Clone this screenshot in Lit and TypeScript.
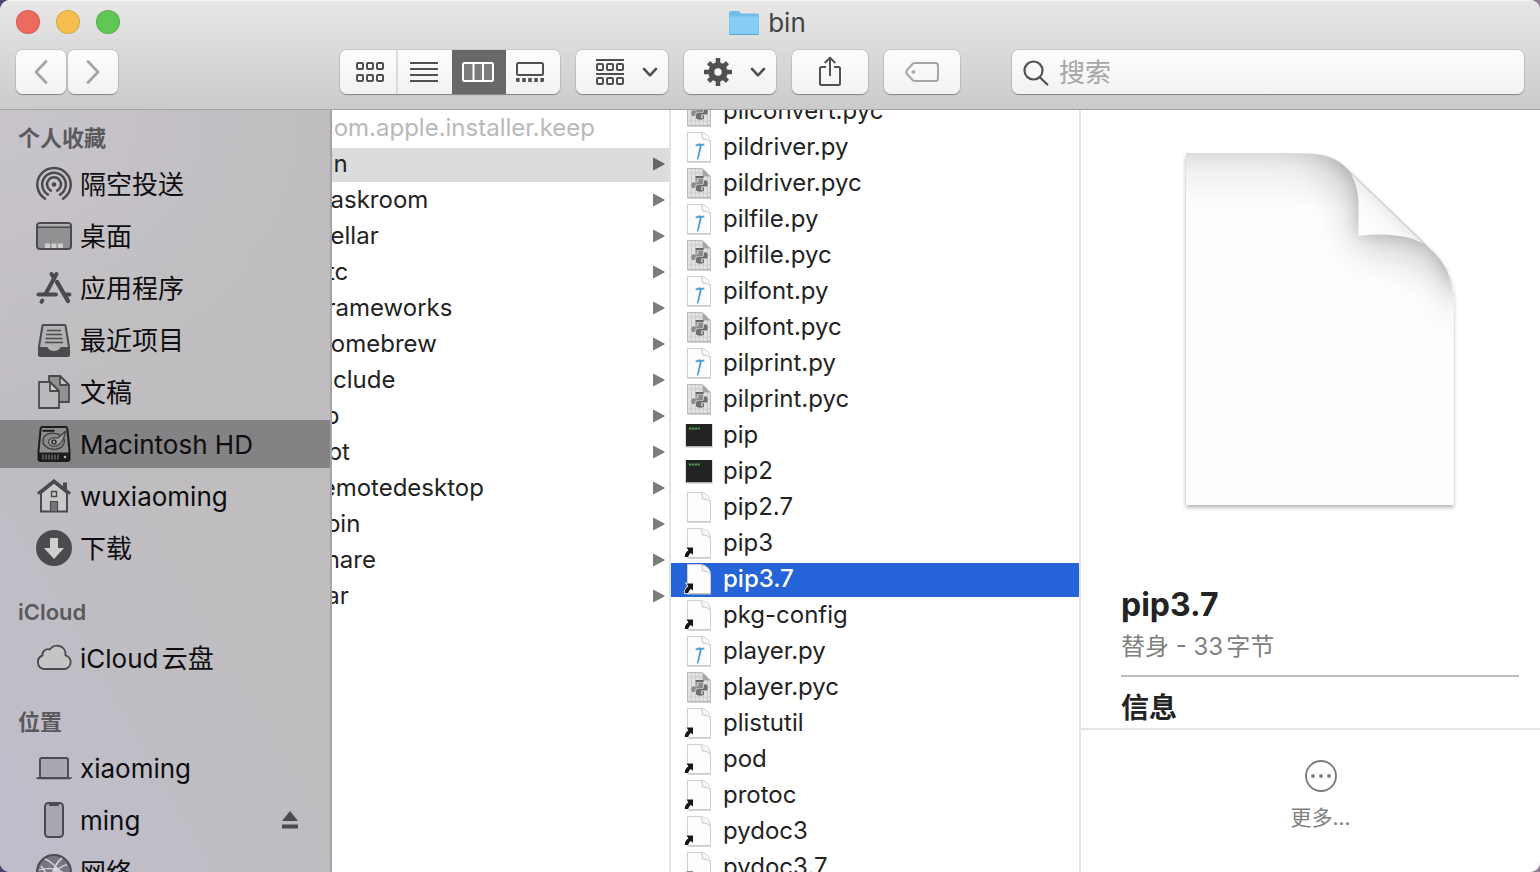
import { LitElement, html, css, svg } from "lit";
import { customElement, property, query } from "lit/decorators.js";
import { classMap } from "lit/directives/class-map.js";

type FileKind = "py" | "pyc" | "exec" | "doc" | "alias" | "folder";

interface Entry {
  name: string;
  kind: FileKind;
}

/* ---------- toolbar glyphs ---------- */

const backGlyph = html`<svg width="14" height="24" viewBox="0 0 14 24" fill="none" stroke="#a3a3a3" stroke-width="2.6" stroke-linecap="round" stroke-linejoin="round"><path d="M12 1.5 2 12l10 10.5" /></svg>`;
const forwardGlyph = html`<svg width="14" height="24" viewBox="0 0 14 24" fill="none" stroke="#a3a3a3" stroke-width="2.6" stroke-linecap="round" stroke-linejoin="round"><path d="M2 1.5 12 12 2 22.500" /></svg>`;
const gridGlyph = html`<svg width="28" height="20" viewBox="0 0 28 20" fill="none" stroke="#505050" stroke-width="2">
  <rect x="1" y="1" width="6" height="6" rx="1" /><rect x="11" y="1" width="6" height="6" rx="1" /><rect x="21" y="1" width="6" height="6" rx="1" />
  <rect x="1" y="13" width="6" height="6" rx="1" /><rect x="11" y="13" width="6" height="6" rx="1" /><rect x="21" y="13" width="6" height="6" rx="1" />
</svg>`;
const listGlyph = html`<svg width="28" height="20" viewBox="0 0 28 20" stroke="#505050" stroke-width="2"><path d="M0 1h28M0 7h28M0 13h28M0 19h28" /></svg>`;
const columnsGlyph = html`<svg width="32" height="20" viewBox="0 0 32 20" fill="#7c7c7c" stroke="#fff" stroke-width="2"><rect x="1" y="1" width="30" height="18" rx="1.500" /><path d="M11.500 1v18M21 1v18" /></svg>`;
const galleryGlyph = html`<svg width="28" height="20" viewBox="0 0 28 20">
  <rect x="1" y="1" width="26" height="12" rx="1.500" fill="none" stroke="#505050" stroke-width="2" />
  <path d="M0 16h3.600v4H1.500Q0 20 0 18.500zM6.200 16h3.500v4H6.200zM12.200 16h3.500v4h-3.500zM18.300 16h3.500v4h-3.500zM24.400 16H28v2.500q0 1.500-1.500 1.500h-2.100z" fill="#505050" />
</svg>`;
const groupGlyph = html`<svg width="28" height="26" viewBox="0 0 28 26" fill="none" stroke="#505050" stroke-width="2">
  <path d="M0 1h28M0 15h28" />
  <rect x="1" y="5" width="6" height="6" rx="1" /><rect x="11" y="5" width="6" height="6" rx="1" /><rect x="21" y="5" width="6" height="6" rx="1" />
  <rect x="1" y="19" width="6" height="6" rx="1" /><rect x="11" y="19" width="6" height="6" rx="1" /><rect x="21" y="19" width="6" height="6" rx="1" />
</svg>`;
const chevronGlyph = html`<svg width="16" height="10" viewBox="0 0 16 10" fill="none" stroke="#505050" stroke-width="2.600" stroke-linecap="round" stroke-linejoin="round"><path d="m2 1.900 6 6.400 6-6.400" /></svg>`;
const gearGlyph = html`<svg width="28" height="28" viewBox="0 0 28 28">
  <g fill="none" stroke="#505050" stroke-width="4.600"><path d="M14 0v8M14 20v8M0 14h8M20 14h8M4.600 4.600l5.200 5.200M18.200 18.200l5.200 5.200M23.400 4.600l-5.200 5.200M9.800 18.200l-5.200 5.200" /><circle cx="14" cy="14" r="6.700" stroke-width="6" /></g>
</svg>`;
const shareGlyph = html`<svg width="24" height="32" viewBox="0 0 24 32" fill="none" stroke="#505050" stroke-width="2" stroke-linejoin="round"><path d="M8 11H3.500Q2 11 2 12.500v15Q2 29 3.500 29h17q1.500 0 1.500-1.500v-15Q22 11 20.500 11H16M12 20V2M6.800 7 12 1.600 17.200 7" /></svg>`;
const tagGlyph = html`<svg width="34" height="20" viewBox="0 0 34 20" fill="none" stroke="#a6a6a6" stroke-width="2" stroke-linejoin="round"><path d="M10 1h20.500Q33 1 33 3.500v13q0 2.500-2.500 2.500H10q-1.500 0-2.500-1L2 12q-1.500-2 0-4l5.500-6q1-1 2.500-1z" /><circle cx="8.500" cy="10" r="1.400" fill="#a6a6a6" stroke-width="1" /></svg>`;
const searchGlyph = html`<svg width="26" height="26" viewBox="0 0 26 26" fill="none" stroke="#505050" stroke-width="2.200" stroke-linecap="round"><circle cx="10.500" cy="10.500" r="9" /><path d="m17 17.500 7.300 7" /></svg>`;
const folderGlyph = html`<svg width="32" height="28" viewBox="0 0 32 28">
  <path d="M1 4Q1 2 2.500 2h7.300q1 0 1.700.8L13 4.500h16.500Q31 4.500 31 6v18.500q0 1.500-1.500 1.500h-27Q1 26 1 24.500z" fill="#6fbde8" />
  <path d="M1.500 7.500h29v16.800q0 1-1 1h-27q-1 0-1-1z" fill="#86cdf5" />
  <path d="M1.500 25.500h29" stroke="#5aa6d2" stroke-width="1" />
</svg>`;

/* ---------- sidebar glyphs ---------- */

const airdropGlyph = html`<svg width="36" height="36" viewBox="0 0 36 36" fill="none" stroke="#4c4a4d" stroke-width="2.500" stroke-linecap="round">
  <path d="M9 32.700A16.700 16.700 0 1 1 27 32.700" /><path d="M12 28.600A11.800 11.800 0 1 1 24 28.600" /><path d="M14.800 24.600A7 7 0 1 1 21.200 24.600" />
  <circle cx="18" cy="18.500" r="2.300" fill="#4c4a4d" stroke="none" />
</svg>`;
const desktopGlyph = html`<svg width="36" height="36" viewBox="0 0 36 36">
  <rect x="1" y="5" width="34" height="26" rx="3" fill="#919093" stroke="#4c4a4d" stroke-width="2" />
  <path d="M2.500 6h31v2.500h-31z" fill="#b0aeb1" /><path d="M2 9.200h32" stroke="#4c4a4d" stroke-width="1.400" />
  <path d="M9 25.500h5V30H9zM15.500 25.500h5V30h-5zM22 25.500h5V30h-5z" fill="#d0ced1" />
</svg>`;
const appsGlyph = html`<svg width="36" height="36" viewBox="0 0 36 36" fill="none" stroke="#4c4a4d" stroke-linecap="round">
  <path d="M20.500 4 9.500 24" stroke-width="4" /><path d="M15.500 4 18 8" stroke-width="4" />
  <path d="M21 12 32 31" stroke-width="4.400" /><path d="M2.500 24.500H20M28.500 24.500h5" stroke-width="4" /><path d="M6.300 30.500 5.500 31.800" stroke-width="4" />
</svg>`;
const recentsGlyph = html`<svg width="36" height="36" viewBox="0 0 36 36">
  <path d="M6.500 3.500Q6.700 3 7.500 3h21q.8 0 1 .5L33 25v7.500q0 1.500-1.500 1.500h-27Q3 34 3 32.500V25z" fill="#b3b1b4" stroke="#4c4a4d" stroke-width="2" stroke-linejoin="round" />
  <path d="M3 25h7.500q1 0 1.500 1 1.500 3 6 3t6-3q.5-1 1.500-1H33v8.500H3z" fill="#4c4a4d" />
  <path d="M11 8.500h14M10 12.500h16M9.500 16.500h17M9 20.500h18" stroke="#4c4a4d" stroke-width="1.700" />
</svg>`;
const docsGlyph = html`<svg width="36" height="36" viewBox="0 0 36 36" stroke="#4c4a4d" stroke-width="1.800" stroke-linejoin="round">
  <path d="M13 2h11l9 9v17H13z" fill="#919093" /><path d="M24 2v9h9z" fill="#c2c0c3" />
  <path d="M3 8h11l9 9v17H3z" fill="#bbb9bc" /><path d="M14 8v9h9z" fill="#d0ced1" />
</svg>`;
const driveGlyph = html`<svg width="36" height="36" viewBox="0 0 36 36">
  <path d="M6.500 1h23Q31 1 31.300 2.500L33.500 25v8q0 2-2 2h-27q-2 0-2-2v-8L4.700 2.500Q5 1 6.500 1z" fill="#8d8b8e" stroke="#1d1c1e" stroke-width="2" />
  <path d="M2.500 26.500h31V34h-31z" fill="#1d1c1e" />
  <path d="M7 28.500v5M10 28.500v5M13 28.500v5M16 28.500v5M19 28.500v5M22 28.500v5" stroke="#716f72" stroke-width="1.300" /><circle cx="29" cy="31" r="1.300" fill="#b5b3b6" />
  <path d="M6.500 4.800h12" stroke="#1d1c1e" stroke-width="2" />
  <path d="M24 8.800Q13 5 8 11 4.500 18 12 22q7 3 13-.5 4.500-4 3-9" fill="none" stroke="#454346" stroke-width="1.500" />
  <path d="M29.500 5.500Q28 14 23 18.500q-4.500 3.500-9 .5-3.500-4 1-6.500 3-1.500 6.500-.5 4-2.500 7.500-6.500z" fill="#a3a1a4" stroke="#454346" stroke-width="1.300" />
  <circle cx="18" cy="16" r="2" fill="none" stroke="#353336" stroke-width="1.600" />
</svg>`;
const homeGlyph = html`<svg width="36" height="36" viewBox="0 0 36 36">
  <path d="M27 4.500h4v9l-4-3.500z" fill="#4c4a4d" />
  <path d="M5 15 18 4.500 31 15v18.500H5z" fill="#cbc9cc" stroke="#4c4a4d" stroke-width="2" />
  <path d="M1.800 15.600 18 3l16.200 12.600" fill="none" stroke="#4c4a4d" stroke-width="3" />
  <path d="M15.500 13.500h5v5h-5z" fill="none" stroke="#4c4a4d" stroke-width="1.400" /><path d="M14.500 23.500h7v10h-7z" fill="#747276" stroke="#4c4a4d" stroke-width="1.200" />
</svg>`;
const downloadsGlyph = html`<svg width="36" height="36" viewBox="0 0 36 36"><circle cx="18" cy="18" r="18" fill="#4c4a4d" /><path d="M14 8h8v10h6L18 29 8 18h6z" fill="#d0ced1" /></svg>`;
const cloudGlyph = html`<svg width="36" height="36" viewBox="0 0 36 36"><path d="M8 29A7 7 0 0 1 6.500 15.500 5.500 5.500 0 0 1 13.800 9.500 8.600 8.600 0 0 1 29.500 15.300 7 7 0 0 1 28.500 29z" fill="#c6c4c7" stroke="#4c4a4d" stroke-width="1.900" stroke-linejoin="round" /></svg>`;
const laptopGlyph = html`<svg width="36" height="36" viewBox="0 0 36 36"><rect x="4" y="8" width="28" height="20" rx="1.800" fill="#a9a7b0" stroke="#4c4a50" stroke-width="1.900" /><path d="M0 27.300h36q0 1.900-2.500 1.900h-31Q0 29.200 0 27.300z" fill="#4c4a50" /></svg>`;
const phoneGlyph = html`<svg width="36" height="36" viewBox="0 0 36 36"><rect x="9" y="1" width="18" height="34" rx="3.500" fill="#a9a7b0" stroke="#4c4a50" stroke-width="2" /><path d="M13 1h10v1.500Q23 4 21.500 4h-7Q13 4 13 2.500z" fill="#4c4a50" /></svg>`;
const networkGlyph = html`<svg width="36" height="36" viewBox="0 0 36 36">
  <circle cx="18" cy="18" r="17" fill="#77757f" stroke="#4c4a50" stroke-width="2" />
  <path d="M9 5Q16 8 22 15.500 24 20 22 33M26 4Q20 9 18 16 12 25 5 28M3 16q10-3 19 0 7 3 11 8M22 15.500Q27 11 31 11M5 12q6 8 14 21" fill="none" stroke="#cfcdd8" stroke-width="1.700" />
  <circle cx="20" cy="15.500" r="2.600" fill="#d8d6df" />
</svg>`;
const ejectGlyph = html`<svg width="16" height="18" viewBox="0 0 16 18" fill="#4c4a50"><path d="M8 0l8 10H0zM0 13.500h16v4H0z" /></svg>`;

/* ---------- file glyphs ---------- */

const pageOutline = svg`
  <path d="M3.500 2.500H17.500Q26.500 5 26.500 12.500V31.500H3.500z" fill="#fdfdfd" stroke="#d0d0d0" stroke-width="1" />
  <path d="M3 32.200h24" stroke="#b9b9b9" stroke-width="0.800" />
  <path d="M17 2.500q1.500 2 1.200 6.500 5-.5 8.300 3" fill="#f3f3f3" stroke="#c9c9c9" stroke-width="1" />`;

const fileGlyphs: Record<FileKind, unknown> = {
  folder: html`<svg class="glyph" viewBox="0 0 30 34"><path d="M2 7h9l2 3h15v17H2z" fill="#7cc8f2" /></svg>`,
  doc: html`<svg class="glyph" viewBox="0 0 30 34">${pageOutline}</svg>`,
  alias: html`<svg class="glyph" viewBox="0 0 30 34">${pageOutline}
    <path d="M2.500 21.500H9v7.300L6.900 27Q4.500 28.700 4.200 31H.700Q.6 27 4.400 24.200z" fill="#161616" stroke="#fff" stroke-width="1.600" paint-order="stroke" /></svg>`,
  py: html`<svg class="glyph" viewBox="0 0 30 34">${pageOutline}
    <path d="M11.500 14.800q3.200-2 7-.9l1.600-.6.400 2.100-2.700.4L14.600 29q-1 .9-1.700 0L15.700 16q-2.300-.5-4 .4z" fill="#4a9fd8" /></svg>`,
  pyc: html`<svg class="glyph" viewBox="0 0 30 34">
    <path d="M3.500 2.500H18.500L26.500 10.500V31.500H3.500z" fill="#e2e2e2" stroke="#bcbcbc" stroke-width="1" />
    <path d="M7.500 3v28M11.500 3v28M15.500 3v28M19.500 3v28M23.500 8v23M4 27h22M4 7h14" stroke="#cccccc" stroke-width="1" />
    <path d="M3 32.200h24" stroke="#a9a9a9" stroke-width="0.800" />
    <path d="M18.500 2.500v8h8z" fill="#a5a5a5" />
    <path d="M11.500 12.500h7.500v6h-6q-2 0-2 2v1.500H8q-1.500-3 0-5.500h5v-1h-1.500z" fill="#8a8a8a" />
    <path d="M20 14.500h3q1.500 3 0 6h-6v1h3v3q-4 2.500-8 0v-4q0-1.500 2-1.500h4q2 0 2-2z" fill="#6e6e6e" />
    <path d="M11.500 11h8" stroke="#5a5a5a" stroke-width="1.800" /><circle cx="13.800" cy="14.500" r=".9" fill="#e6e6e6" /><circle cx="17.800" cy="23" r=".9" fill="#e6e6e6" /></svg>`,
  exec: html`<svg class="glyph" viewBox="0 0 30 34">
    <path d="M1.500 6h27V29.500h-27z" fill="#b4b4b4" /><path d="M2 6h26V28H2z" fill="#222423" />
    <path d="M5 10.500h11" stroke="#4f9d4d" stroke-width="1.800" stroke-dasharray="2.200 .7" /></svg>`,
};

const arrowGlyph = html`<svg class="arrow" width="12" height="14" viewBox="0 0 12 14"><path d="M.8.700 11.300 6.500q.8.500 0 1L.8 13.300Q0 13.600 0 12.800V1.200Q0 .4.800.700z" fill="currentColor" /></svg>`;

const pagePreview = html`<svg class="art" viewBox="0 0 288 380" role="img" aria-label="pip3.7">
  <defs>
    <clipPath id="page"><path d="M10 10H130C157 10 167 20 175 29L250 101C268 116 277 132 277.500 159V361H10z" /></clipPath>
    <filter id="soft" x="-40%" y="-40%" width="180%" height="180%"><feGaussianBlur stdDeviation="18" /></filter>
    <filter id="softer" x="-40%" y="-40%" width="180%" height="180%"><feGaussianBlur stdDeviation="8" /></filter>
    <filter id="lift" x="-10%" y="-10%" width="120%" height="120%"><feDropShadow dx="0" dy="2.500" stdDeviation="2.200" flood-color="#000" flood-opacity="0.300" /></filter>
    <linearGradient id="curl" x1="182" y1="91" x2="214" y2="58" gradientUnits="userSpaceOnUse"><stop offset="0" stop-color="#fff" /><stop offset="0.600" stop-color="#fafafa" /><stop offset="0.850" stop-color="#ededed" /><stop offset="1" stop-color="#d9d9d9" /></linearGradient>
    <linearGradient id="top" x1="0" y1="10" x2="0" y2="66" gradientUnits="userSpaceOnUse"><stop offset="0" stop-color="#e0e0e0" /><stop offset="0.300" stop-color="#f0f0f0" /><stop offset="1" stop-color="#fefefe" /></linearGradient>
  </defs>
  <path d="M10 10H130C157 10 167 20 175 29L250 101C268 116 277 132 277.500 159V361H10z" fill="#fff" filter="url(#lift)" />
  <g clip-path="url(#page)">
    <path d="M10 10H278V361H10z" fill="#fefefe" />
    <path d="M10 10H278V66H10z" fill="url(#top)" />
    <path d="M110 -10Q160 20 170 60L178 104Q225 108 262 130L284 172L340 80L200 -40z" fill="#8c8c8c" opacity="0.380" filter="url(#soft)" />
    <path d="M152 8Q182 30 183 55L185 90Q228 88 254 102L280 145L300 80L200 0z" fill="#707070" opacity="0.400" filter="url(#softer)" />
  </g>
  <path d="M175 29Q182 45 182.500 56V91.700Q227 87 250 101z" fill="url(#curl)" />
  <path d="M175 29 250 101" stroke="#cfcfcf" stroke-width="1.200" />
  <path d="M10 10H130C157 10 167 20 175 29" fill="none" stroke="#cdcdcd" stroke-width="1" />
</svg>`;

const moreGlyph = html`<svg width="32" height="32" viewBox="0 0 32 32"><circle cx="16" cy="16" r="15" fill="none" stroke="#7d7d7d" stroke-width="1.900" /><g fill="#7d7d7d"><circle cx="8" cy="16" r="1.900" /><circle cx="16" cy="16" r="1.900" /><circle cx="24" cy="16" r="1.900" /></g></svg>`;

/* ---------- data ---------- */

const sections = [
  {
    title: "个人收藏",
    items: [
      { label: "隔空投送", icon: airdropGlyph },
      { label: "桌面", icon: desktopGlyph },
      { label: "应用程序", icon: appsGlyph },
      { label: "最近项目", icon: recentsGlyph },
      { label: "文稿", icon: docsGlyph },
      { label: "Macintosh HD", icon: driveGlyph, current: true },
      { label: "wuxiaoming", icon: homeGlyph },
      { label: "下载", icon: downloadsGlyph },
    ],
  },
  { title: "iCloud", items: [{ label: "iCloud云盘", icon: cloudGlyph }] },
  {
    title: "位置",
    items: [
      { label: "xiaoming", icon: laptopGlyph },
      { label: "ming", icon: phoneGlyph, ejectable: true },
      { label: "网络", icon: networkGlyph },
    ],
  },
] as { title: string; items: { label: string; icon: unknown; current?: boolean; ejectable?: boolean }[] }[];

const folder = (name: string): Entry => ({ name, kind: "folder" });

const parentEntries: Entry[] = [
  { name: ".com.apple.installer.keep", kind: "doc" },
  ...["bin", "Caskroom", "Cellar", "etc", "Frameworks", "Homebrew", "include", "lib", "opt", "remotedesktop", "sbin", "share", "var"].map(folder),
];

const binEntries: Entry[] = [
  { name: "pilconvert.pyc", kind: "pyc" },
  { name: "pildriver.py", kind: "py" },
  { name: "pildriver.pyc", kind: "pyc" },
  { name: "pilfile.py", kind: "py" },
  { name: "pilfile.pyc", kind: "pyc" },
  { name: "pilfont.py", kind: "py" },
  { name: "pilfont.pyc", kind: "pyc" },
  { name: "pilprint.py", kind: "py" },
  { name: "pilprint.pyc", kind: "pyc" },
  { name: "pip", kind: "exec" },
  { name: "pip2", kind: "exec" },
  { name: "pip2.7", kind: "doc" },
  { name: "pip3", kind: "alias" },
  { name: "pip3.7", kind: "alias" },
  { name: "pkg-config", kind: "alias" },
  { name: "player.py", kind: "py" },
  { name: "player.pyc", kind: "pyc" },
  { name: "plistutil", kind: "alias" },
  { name: "pod", kind: "alias" },
  { name: "protoc", kind: "alias" },
  { name: "pydoc3", kind: "alias" },
  { name: "pydoc3.7", kind: "alias" },
];

/* ---------- elements ---------- */

@customElement("finder-toolbar")
class FinderToolbar extends LitElement {
  static styles = css`
    :host {
      display: block;
      flex: none;
      background: linear-gradient(#e7e7e7, #cbcbcb);
      border-top: 1px solid #f4f4f4;
      border-bottom: 1px solid #a3a3a3;
    }
    svg { display: block; flex: none; }
    button {
      font: inherit;
      border: 0;
      padding: 0;
      margin: 0;
      background: none;
      display: flex;
      align-items: center;
      justify-content: center;
    }
    .titlebar {
      display: grid;
      grid-template-columns: 1fr auto 1fr;
      align-items: center;
      height: 42px;
      padding: 0 16px;
    }
    .lights { display: flex; gap: 16px; }
    .light { width: 24px; height: 24px; border-radius: 50%; box-shadow: inset 0 0 0 1px rgba(0, 0, 0, 0.12); }
    .close { background: #ed6a5f; }
    .minimise { background: #f6be4f; }
    .zoom { background: #62c655; }
    .title {
      display: flex;
      align-items: center;
      gap: 8px;
      margin: 0;
      padding: 2px 6px 0 0;
      font-size: 26px;
      line-height: 32px;
      font-weight: 400;
      color: #444;
    }
    .controls {
      display: flex;
      align-items: center;
      gap: 16px;
      padding: 7px 16px 15px;
    }
    .plate {
      height: 44px;
      border-radius: 7px;
      background: linear-gradient(#fdfdfd, #f2f2f2);
      box-shadow: 0 0 0 1px rgba(0, 0, 0, 0.07), 0 1px 1px rgba(0, 0, 0, 0.32);
    }
    .history { display: flex; gap: 2px; flex: 0 0 308px; }
    .history .plate { width: 50px; }
    .views { display: flex; overflow: hidden; }
    .views button { width: 54px; }
    .views button:first-child { box-sizing: border-box; width: 58px; padding-left: 4px; border-right: 2px solid #dadada; }
    .views button:nth-child(n + 2) { box-sizing: border-box; padding-right: 2px; }
    .views button:last-child { padding-right: 6px; }
    .views .active { background: #686868; }
    .menu { width: 92px; gap: 18px; padding-left: 10px; }
    .action { width: 76px; }
    .search {
      flex: 1;
      min-width: 0;
      margin-left: 36px;
      display: flex;
      align-items: center;
      gap: 10px;
      padding: 2px 11px 0;
      box-sizing: border-box;
    }
    .search input {
      flex: 1;
      min-width: 0;
      border: 0;
      padding: 0;
      outline: 0;
      background: none;
      font: inherit;
      font-size: 26px;
      line-height: 32px;
      color: #222;
    }
    .search input::placeholder { color: #a6a6a6; opacity: 1; }
  `;

  render() {
    return html`
      <div class="titlebar">
        <div class="lights">
          <button class="light close" aria-label="关闭"></button>
          <button class="light minimise" aria-label="最小化"></button>
          <button class="light zoom" aria-label="缩放"></button>
        </div>
        <h1 class="title">${folderGlyph}<span>bin</span></h1>
      </div>
      <div class="controls">
        <div class="history">
          <button class="plate" aria-label="后退">${backGlyph}</button>
          <button class="plate" aria-label="前进">${forwardGlyph}</button>
        </div>
        <div class="plate views">
          <button aria-label="图标">${gridGlyph}</button>
          <button aria-label="列表">${listGlyph}</button>
          <button class="active" aria-label="分栏" aria-pressed="true">${columnsGlyph}</button>
          <button aria-label="画廊">${galleryGlyph}</button>
        </div>
        <button class="plate menu" aria-label="分组" aria-haspopup="menu">${groupGlyph}${chevronGlyph}</button>
        <button class="plate menu" aria-label="操作" aria-haspopup="menu">${gearGlyph}${chevronGlyph}</button>
        <button class="plate action" aria-label="共享">${shareGlyph}</button>
        <button class="plate action" aria-label="标签">${tagGlyph}</button>
        <label class="plate search">${searchGlyph}<input type="text" placeholder="搜索" aria-label="搜索" /></label>
      </div>
    `;
  }
}

@customElement("finder-sidebar")
class FinderSidebar extends LitElement {
  static styles = css`
    :host {
      display: block;
      flex: none;
      width: 330px;
      border-right: 2px solid #a5a3a5;
      padding-top: 6px;
      overflow: hidden;
      background:
        radial-gradient(ellipse 330px 300px at 0 0, rgba(203, 198, 208, 0.8), rgba(203, 198, 208, 0)),
        linear-gradient(60deg, rgba(192, 189, 207, 0.8), rgba(192, 189, 207, 0) 50%),
        #bfbdbf;
    }
    svg { display: block; flex: none; }
    section + section { margin-top: 18px; }
    h2 {
      margin: 0;
      padding-left: 18px;
      font-size: 22px;
      line-height: 44px;
      font-weight: 600;
      color: #5b595c;
    }
    ul { list-style: none; margin: 0; padding: 0; display: grid; gap: 4px; }
    li { display: flex; align-items: center; padding: 0 32px 0 36px; }
    li.current { background: #848284; }
    a {
      flex: 1;
      display: flex;
      align-items: center;
      gap: 8px;
      height: 48px;
      font-size: 26px;
      line-height: 46px;
      color: #0e0d0f;
      text-decoration: none;
      text-autospace: normal;
      white-space: nowrap;
    }
    .label { padding-top: 2px; }
    .eject { border: 0; padding: 0; background: none; }
  `;

  render() {
    return html`<nav aria-label="边栏">
      ${sections.map(
        (section) => html`<section>
          <h2>${section.title}</h2>
          <ul>
            ${section.items.map(
              (item) => html`<li class=${classMap({ current: !!item.current })}>
                <a href="#">${item.icon}<span class="label">${item.label}</span></a>
                ${item.ejectable ? html`<button class="eject" aria-label="推出">${ejectGlyph}</button>` : ""}
              </li>`
            )}
          </ul>
        </section>`
      )}
    </nav>`;
  }
}

@customElement("finder-column")
class FinderColumn extends LitElement {
  @property({ attribute: false }) entries: Entry[] = [];
  @property() selected = "";
  @property({ type: Boolean }) focused = false;
  @property({ type: Number }) offset = 0;

  static styles = css`
    :host {
      display: block;
      box-sizing: border-box;
      border-right: 2px solid #e4e4e4;
      overflow: auto;
      scrollbar-width: none;
      background: #fff;
    }
    ul { list-style: none; margin: 0; padding: 2px 0; display: grid; gap: 2px; }
    button {
      box-sizing: border-box;
      width: 100%;
      height: 34px;
      border: 0;
      margin: 0;
      padding: 0 4px 2px 13px;
      background: none;
      display: flex;
      align-items: center;
      gap: 9px;
      font: inherit;
      font-size: 24px;
      line-height: 32px;
      text-align: left;
      color: #232323;
      white-space: nowrap;
    }
    .name { flex: 1; }
    .glyph { display: block; flex: none; width: 30px; height: 34px; }
    .arrow { display: block; flex: none; color: #7c7c7c; }
    .dim { color: #b9b9b9; }
    .selected { background: #dcdcdc; }
    .selected .arrow { color: #666; }
    .focused { background: #2463d8; color: #fff; font-weight: 500; }
  `;

  firstUpdated() {
    this.scrollTop = this.offset;
  }

  render() {
    return html`<ul>
      ${this.entries.map((entry) => {
        const on = entry.name === this.selected;
        return html`<li>
          <button class=${classMap({ selected: on, focused: on && this.focused, dim: entry.name.startsWith(".") })}>
            ${fileGlyphs[entry.kind]}<span class="name">${entry.name}</span>${entry.kind === "folder" ? arrowGlyph : ""}
          </button>
        </li>`;
      })}
    </ul>`;
  }
}

@customElement("finder-preview")
class FinderPreview extends LitElement {
  static styles = css`
    :host { display: flex; flex-direction: column; min-width: 0; background: #fff; }
    .scroll { flex: 1; min-height: 0; overflow: hidden; padding: 34px 21px 0 40px; }
    .art { display: block; width: 288px; height: 380px; }
    .art-wrap { display: flex; justify-content: center; padding-bottom: 61px; }
    h2, h3, p { margin: 0; }
    h2 { font-size: 32px; line-height: 40px; font-weight: 700; color: #232323; }
    p { font-size: 24px; line-height: 32px; padding: 6px 0 12px; color: #808080; border-bottom: 2px solid #bdbdbd; text-autospace: normal; }
    h3 { font-size: 28px; line-height: 32px; padding-top: 15px; font-weight: 700; color: #232323; }
    .actions {
      flex: none;
      box-sizing: border-box;
      height: 144px;
      padding: 0 0 8px 20px;
      border-top: 2px solid #e4e4e4;
      display: flex;
      align-items: center;
      justify-content: center;
    }
    button {
      border: 0;
      padding: 0;
      background: none;
      display: grid;
      justify-items: center;
      gap: 10px;
      font: inherit;
      font-size: 21px;
      line-height: 32px;
      color: #808080;
    }
    button svg { display: block; }
  `;

  render() {
    return html`
      <div class="scroll">
        <div class="art-wrap">${pagePreview}</div>
        <h2>pip3.7</h2>
        <p>替身 - 33字节</p>
        <h3>信息</h3>
      </div>
      <div class="actions"><button>${moreGlyph}<span>更多...</span></button></div>
    `;
  }
}

@customElement("app-root")
class AppRoot extends LitElement {
  @query(".browser") private browser!: HTMLElement;

  static styles = css`
    :host {
      display: block;
      height: 100vh;
      font-family: Inter, "Noto Sans CJK SC", sans-serif;
      background: linear-gradient(90deg, #4b456e, #8d8190);
    }
    .window {
      height: 100%;
      display: flex;
      flex-direction: column;
      border-radius: 10px;
      overflow: hidden;
      background: #fff;
    }
    .body { flex: 1; min-height: 0; display: flex; }
    .browser { flex: 1; min-width: 0; overflow: auto; scrollbar-width: none; }
    .track {
      height: 100%;
      width: calc(100% + 71px);
      display: grid;
      grid-template-columns: 410px 410px minmax(0, 1fr);
      grid-template-rows: minmax(0, 1fr);
    }
  `;

  firstUpdated() {
    this.browser.scrollLeft = this.browser.scrollWidth;
  }

  render() {
    return html`<div class="window">
      <finder-toolbar></finder-toolbar>
      <div class="body">
        <finder-sidebar></finder-sidebar>
        <div class="browser">
          <div class="track">
            <finder-column .entries=${parentEntries} selected="bin" .offset=${0}></finder-column>
            <finder-column .entries=${binEntries} selected="pip3.7" focused .offset=${17}></finder-column>
            <finder-preview></finder-preview>
          </div>
        </div>
      </div>
    </div>`;
  }
}
